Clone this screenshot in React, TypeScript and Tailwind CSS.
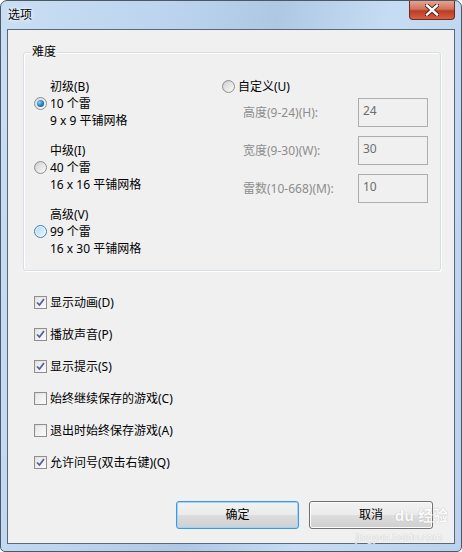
import React from "react";

const font = { fontFamily: '"Noto Sans", "Noto Sans CJK SC", sans-serif' };

function Radio({ state }: { state: "checked" | "off" | "hover" }) {
  if (state === "checked") {
    return (
      <span className="w-[13px] h-[13px] rounded-full border border-[#8e8f8f] bg-[linear-gradient(135deg,#d9d9d9,#fafafa)] flex items-center justify-center shrink-0">
        <span className="w-[7px] h-[7px] rounded-full bg-[radial-gradient(circle_at_35%_35%,#8dd0f5,#1a7cc0_55%,#0b4a85)]" />
      </span>
    );
  }
  if (state === "hover") {
    return (
      <span className="w-[13px] h-[13px] rounded-full border border-[#3c7fb1] bg-[linear-gradient(135deg,#dcf0fc,#ffffff)] flex items-center justify-center shrink-0">
        <span className="w-[9px] h-[9px] rounded-full bg-[linear-gradient(135deg,#b2dcf5,#e6f5fd)]" />
      </span>
    );
  }
  return (
    <span className="w-[13px] h-[13px] rounded-full border border-[#8e8f8f] bg-[linear-gradient(135deg,#c8c8c8,#fafafa)] flex items-center justify-center shrink-0">
      <span className="w-[9px] h-[9px] rounded-full bg-[linear-gradient(135deg,#d6d6d6,#f6f6f6)]" />
    </span>
  );
}

function Check({ checked }: { checked: boolean }) {
  return (
    <span className="w-[13px] h-[13px] border border-[#8f8f8f] bg-[linear-gradient(135deg,#dcdcdc,#fbfbfb)] flex items-center justify-center shrink-0 p-[1px]">
      <span className="w-full h-full bg-[linear-gradient(135deg,#e8e8e8,#f9f9f9)] flex items-center justify-center">
        {checked && (
          <svg width="9" height="9" viewBox="0 0 9 9">
            <path d="M1 4.5 L3.5 7 L8 1" fill="none" stroke="#4a5f97" strokeWidth="1.7" />
          </svg>
        )}
      </span>
    </span>
  );
}

function Level({ title, count, grid, state }: { title: string; count: string; grid: string; state: "checked" | "off" | "hover" }) {
  return (
    <div className="flex flex-col text-[12px] leading-[17px] text-black">
      <div className="pl-[16px]">{title}</div>
      <div className="flex items-center gap-[3px]">
        <Radio state={state} />
        <span>{count}</span>
      </div>
      <div className="pl-[16px]">{grid}</div>
    </div>
  );
}

function Field({ label, value }: { label: string; value: string }) {
  return (
    <div className="flex items-center">
      <span className="w-[136px] pl-[21px] text-[#8d8d8d] text-[12px]">{label}</span>
      <div className="w-[70px] h-[29px] border border-[#adadad] bg-[#f0f0f0] px-[4px] pt-[3px] text-[12px] leading-[17px] text-[#6d6d6d]">
        {value}
      </div>
    </div>
  );
}

export default function App() {
  const checks: [string, boolean][] = [
    ["显示动画(D)", true],
    ["播放声音(P)", true],
    ["显示提示(S)", true],
    ["始终继续保存的游戏(C)", false],
    ["退出时始终保存游戏(A)", false],
    ["允许问号(双击右键)(Q)", true],
  ];
  return (
    <div style={font} className="w-[462px] h-[552px] relative rounded-t-[7px] rounded-b-[5px] border border-[#4c5866] bg-[linear-gradient(100deg,#c9def4_0%,#bcd4ef_30%,#aec8e4_50%,#c6dcf4_70%,#bad2ed_100%)] overflow-hidden">
      <div className="h-[28px] flex items-center pl-[7px] text-[12px] text-black">
        <span className="[text-shadow:0_0_6px_#ffffff,0_0_3px_#ffffff]">选项</span>
      </div>
      <div className="absolute top-0 right-[6px] w-[46px] h-[19px] rounded-b-[4px] border border-t-0 border-[#762a1f] bg-[linear-gradient(#e6a491_0%,#d1725e_45%,#b93d26_55%,#d5603f_100%)] flex items-center justify-center">
        <svg width="14" height="12" viewBox="0 0 14 12">
          <path d="M2 1.5 L12 10.5 M12 1.5 L2 10.5" stroke="#4a1d14" strokeWidth="4.2" strokeLinecap="square" />
          <path d="M2 1.5 L12 10.5 M12 1.5 L2 10.5" stroke="#ffffff" strokeWidth="2.4" strokeLinecap="square" />
        </svg>
      </div>
      <div className="ml-[6px] w-[448px] h-[515px] border border-[#5b6878] bg-[#f0f0f0] flex flex-col">
        <div className="ml-[15px] mt-[22px] w-[418px] h-[219px] relative border border-[#d5dfe5] shadow-[inset_1px_1px_0_#ffffff,1px_1px_0_#ffffff] rounded-[3px] flex pl-[10px] pt-[25px]">
          <span className="absolute left-[7px] top-[-10px] px-[1px] bg-[#f0f0f0] text-[12px] leading-[17px] text-black">难度</span>
          <div className="w-[188px] flex flex-col gap-[13px]">
            <Level title="初级(B)" count="10 个雷" grid="9 x 9 平铺网格" state="checked" />
            <Level title="中级(I)" count="40 个雷" grid="16 x 16 平铺网格" state="off" />
            <Level title="高级(V)" count="99 个雷" grid="16 x 30 平铺网格" state="hover" />
          </div>
          <div className="flex flex-col">
            <div className="flex items-center gap-[3px] h-[17px] text-[12px] text-black">
              <Radio state="off" />
              <span>自定义(U)</span>
            </div>
            <div className="flex flex-col gap-[9px] mt-[3px]">
              <Field label="高度(9-24)(H):" value="24" />
              <Field label="宽度(9-30)(W):" value="30" />
              <Field label="雷数(10-668)(M):" value="10" />
            </div>
          </div>
        </div>
        <div className="flex flex-col gap-[15px] pl-[26px] mt-[23px]">
          {checks.map(([t, c]) => (
            <div key={t} className="flex items-center gap-[3px] h-[17px] text-[12px] text-black">
              <Check checked={c} />
              <span>{t}</span>
            </div>
          ))}
        </div>
        <div className="flex justify-end gap-[10px] pr-[21px] mt-[30px] relative">
          <button className="w-[123px] h-[28px] rounded-[3px] border border-[#3c9ae0] shadow-[inset_0_0_0_1px_#9fd5f7] bg-[linear-gradient(#f2f2f2_0%,#ebebeb_50%,#dddddd_51%,#cfcfcf_100%)] text-[12px] text-black">
            确定
          </button>
          <button className="w-[124px] h-[28px] rounded-[3px] border border-[#707070] shadow-[inset_0_0_0_1px_#fcfcfc] bg-[linear-gradient(#f2f2f2_0%,#ebebeb_50%,#dddddd_51%,#cfcfcf_100%)] text-[12px] text-black">
            取消
          </button>
          <span className="absolute right-[6px] top-[5px] pointer-events-none text-[15px] leading-[18px] font-bold text-[#ffffff] opacity-80 [text-shadow:0_0_1px_#9a9a9a]">
            du 经验
          </span>
          <span className="absolute right-[12px] top-[30px] pointer-events-none text-[10px] leading-[12px] text-[#ffffff] opacity-80 [text-shadow:0_0_1px_#9a9a9a]">
            jingyan.baidu.com
          </span>
        </div>
      </div>
    </div>
  );
}
